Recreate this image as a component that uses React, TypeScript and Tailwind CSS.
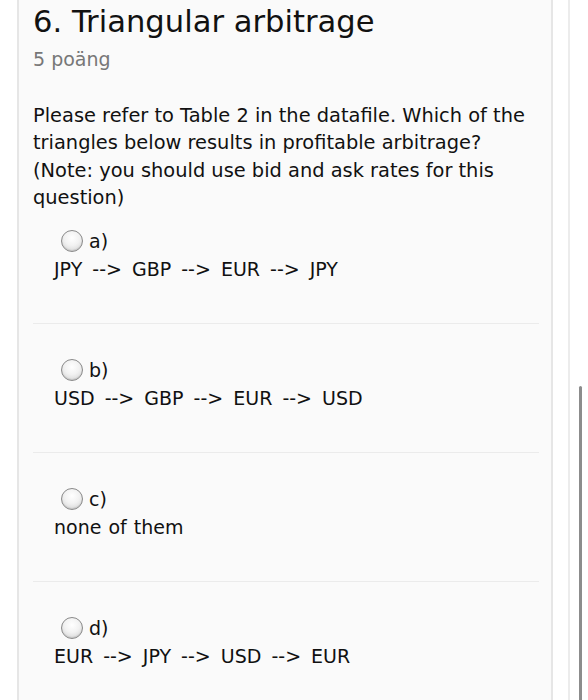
import React from "react";

const options = [
  { label: "a)", text: "JPY --> GBP --> EUR --> JPY", arrows: true },
  { label: "b)", text: "USD --> GBP --> EUR --> USD", arrows: true },
  { label: "c)", text: "none of them", arrows: false },
  { label: "d)", text: "EUR --> JPY --> USD --> EUR", arrows: true },
];

function Radio() {
  return (
    <span className="inline-block w-[22px] h-[22px] rounded-full border border-[#8a8a8a] bg-[radial-gradient(circle_at_50%_35%,#ffffff_0%,#f2f2f2_45%,#cfcfcf_100%)] shadow-[inset_0_-1px_1px_rgba(0,0,0,0.1)]" />
  );
}

export default function App() {
  return (
    <div
      className="relative w-[588px] h-[700px] overflow-hidden bg-white text-[#111]"
      style={{ fontFamily: '"DejaVu Sans", Verdana, sans-serif' }}
    >
      <div className="flex h-full">
        {/* question card */}
        <div className="ml-[17px] w-[536px] h-full border-x-2 border-[#e6e6e6] bg-[#fafafa] pl-[14px] pr-[12px]">
          <h1 className="pt-[4px] text-[30.6px] leading-[36px] font-normal">
            6. Triangular arbitrage
          </h1>
          <div className="mt-[6px] text-[19px] leading-[27px] text-[#777]">5 poäng</div>

          <p className="mt-[29px] w-[505px] text-[19.4px] leading-[27.3px]">
            Please refer to Table 2 in the datafile. Which of the triangles below results in
            profitable arbitrage? (Note: you should use bid and ask rates for this question)
          </p>

          <div className="mt-[17px]">
            {options.map((o, i) => (
              <div key={o.label}>
                {i > 0 && <div className="h-px bg-[#ebebeb] mb-[33px]" />}
                <div className="pl-[21px] text-[19px]">
                  <label className="flex items-center gap-[6px] ml-[7px] h-[26px]">
                    <Radio />
                    <span className="leading-[26px]">{o.label}</span>
                  </label>
                  <div
                    className={
                      o.arrows
                        ? "mt-[2px] leading-[27px] [word-spacing:4px]"
                        : "mt-[2px] leading-[27px] [word-spacing:1px]"
                    }
                  >
                    {o.text}
                  </div>
                </div>
                <div className="h-[40px]" />
              </div>
            ))}
          </div>
        </div>

        {/* right gutter */}
        <div className="ml-[15px] w-[2px] h-full bg-[#ececec]" />
      </div>

      {/* scrollbar thumb */}
      <div className="absolute left-[579px] top-[386px] w-[3px] h-[330px] rounded-full bg-[#8c8c8c]" />
    </div>
  );
}
